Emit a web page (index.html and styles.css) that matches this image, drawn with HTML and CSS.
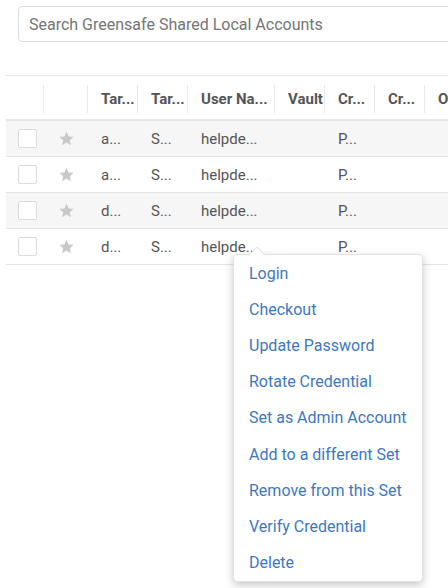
FILE: index.html
```html
<!DOCTYPE html>
<html>
<head>
<meta charset="utf-8">
<link rel="stylesheet" href="styles.css">
</head>
<body>
<div class="page">
  <div class="search">
    <span class="placeholder">Search Greensafe Shared Local Accounts</span>
  </div>

  <div class="grid">
    <div class="row head">
      <div class="c c-check"></div>
      <div class="c c-star"></div>
      <div class="c c-w50">Tar...</div>
      <div class="c c-w50">Tar...</div>
      <div class="c c-user">User Na...</div>
      <div class="c c-w50">Vault</div>
      <div class="c c-w50">Cr...</div>
      <div class="c c-w50">Cr...</div>
      <div class="c c-w50">O</div>
    </div>

    <div class="row body odd">
      <div class="c c-check"><span class="box"></span></div>
      <div class="c c-star"><svg class="star" viewBox="0 0 24 24"><path d="M12 2.5l2.9 6.5 7.1.7-5.4 4.7 1.6 7L12 17.8l-6.2 3.6 1.6-7L2 9.7l7.1-.7z"/></svg></div>
      <div class="c c-w50">a...</div>
      <div class="c c-w50">S...</div>
      <div class="c c-user">helpde...</div>
      <div class="c c-w50"></div>
      <div class="c c-w50">P...</div>
      <div class="c c-w50"></div>
      <div class="c c-w50"></div>
    </div>
    <div class="row body">
      <div class="c c-check"><span class="box"></span></div>
      <div class="c c-star"><svg class="star" viewBox="0 0 24 24"><path d="M12 2.5l2.9 6.5 7.1.7-5.4 4.7 1.6 7L12 17.8l-6.2 3.6 1.6-7L2 9.7l7.1-.7z"/></svg></div>
      <div class="c c-w50">a...</div>
      <div class="c c-w50">S...</div>
      <div class="c c-user">helpde...</div>
      <div class="c c-w50"></div>
      <div class="c c-w50">P...</div>
      <div class="c c-w50"></div>
      <div class="c c-w50"></div>
    </div>
    <div class="row body odd">
      <div class="c c-check"><span class="box"></span></div>
      <div class="c c-star"><svg class="star" viewBox="0 0 24 24"><path d="M12 2.5l2.9 6.5 7.1.7-5.4 4.7 1.6 7L12 17.8l-6.2 3.6 1.6-7L2 9.7l7.1-.7z"/></svg></div>
      <div class="c c-w50">d...</div>
      <div class="c c-w50">S...</div>
      <div class="c c-user">helpde...</div>
      <div class="c c-w50"></div>
      <div class="c c-w50">P...</div>
      <div class="c c-w50"></div>
      <div class="c c-w50"></div>
    </div>
    <div class="row body">
      <div class="c c-check"><span class="box"></span></div>
      <div class="c c-star"><svg class="star" viewBox="0 0 24 24"><path d="M12 2.5l2.9 6.5 7.1.7-5.4 4.7 1.6 7L12 17.8l-6.2 3.6 1.6-7L2 9.7l7.1-.7z"/></svg></div>
      <div class="c c-w50">d...</div>
      <div class="c c-w50">S...</div>
      <div class="c c-user">helpde...</div>
      <div class="c c-w50"></div>
      <div class="c c-w50">P...</div>
      <div class="c c-w50"></div>
      <div class="c c-w50"></div>
    </div>
  </div>

  <div class="menu">
    <div class="item">Login</div>
    <div class="item">Checkout</div>
    <div class="item">Update Password</div>
    <div class="item">Rotate Credential</div>
    <div class="item">Set as Admin Account</div>
    <div class="item">Add to a different Set</div>
    <div class="item">Remove from this Set</div>
    <div class="item">Verify Credential</div>
    <div class="item">Delete</div>
  </div>
</div>
</body>
</html>
```

FILE: styles.css
```css
html, body {
  margin: 0;
  padding: 0;
  overflow: hidden;
  background: #ffffff;
  width: 448px;
  height: 588px;
}

.page {
  position: relative;
  font-family: Roboto, "Liberation Sans", sans-serif;
  padding-top: 6px;
  padding-left: 6px;
  width: 700px;
}

.search {
  margin-left: 12px;
  width: 600px;
  height: 34px;
  border: 1px solid #dcdcdc;
  border-radius: 4px;
  display: flex;
  align-items: center;
  padding-left: 10px;
  box-sizing: content-box;
}

.placeholder {
  font-size: 16px;
  color: #757575;
}

.grid {
  margin-top: 33px;
  border-top: 1px solid #e6e6e6;
  width: 650px;
}

.row {
  display: flex;
  font-size: 15px;
  color: #555;
}

.row.head {
  height: 43px;
  align-items: center;
  font-weight: 700;
  color: #555;
  border-bottom: 2px solid #e6e6e6;
  box-sizing: content-box;
}

.row.head .c {
  height: 28px;
  margin-top: 2px;
  border-right: 1px solid #e8e8e8;
}

.row.body {
  height: 36px;
  box-sizing: border-box;
  align-items: center;
  border-bottom: 1px solid #e3e3e3;
}

.row.body.odd {
  background: #f6f6f6;
}

.c {
  box-sizing: border-box;
  display: flex;
  align-items: center;
  padding-left: 13px;
  white-space: nowrap;
  overflow: hidden;
  flex: none;
}

.c-check { width: 38px; padding-left: 12px; }
.c-star { width: 44px; padding-left: 14px; }
.c-w50 { width: 50px; }
.c-user { width: 87px; }

.box {
  width: 17px;
  height: 17px;
  border: 1px solid #dadada;
  border-radius: 2px;
  background: #fff;
}

.star {
  width: 17px;
  height: 17px;
  fill: #c8c8c8;
}

.menu {
  position: absolute;
  left: 233px;
  top: 254px;
  width: 190px;
  box-sizing: border-box;
  background: #fff;
  border: 1px solid #e2e2e2;
  border-radius: 4px;
  box-shadow: 0 3px 8px rgba(0, 0, 0, 0.22);
  padding: 0;
}

.menu::before {
  content: "";
  position: absolute;
  left: 17px;
  top: -6px;
  width: 11px;
  height: 11px;
  background: #fff;
  border-left: 1px solid #e2e2e2;
  border-top: 1px solid #e2e2e2;
  transform: rotate(45deg);
}

.item {
  position: relative;
  height: 36.2px;
  display: flex;
  align-items: center;
  padding-left: 15px;
  font-size: 16px;
  color: #3d78bf;
}
```
